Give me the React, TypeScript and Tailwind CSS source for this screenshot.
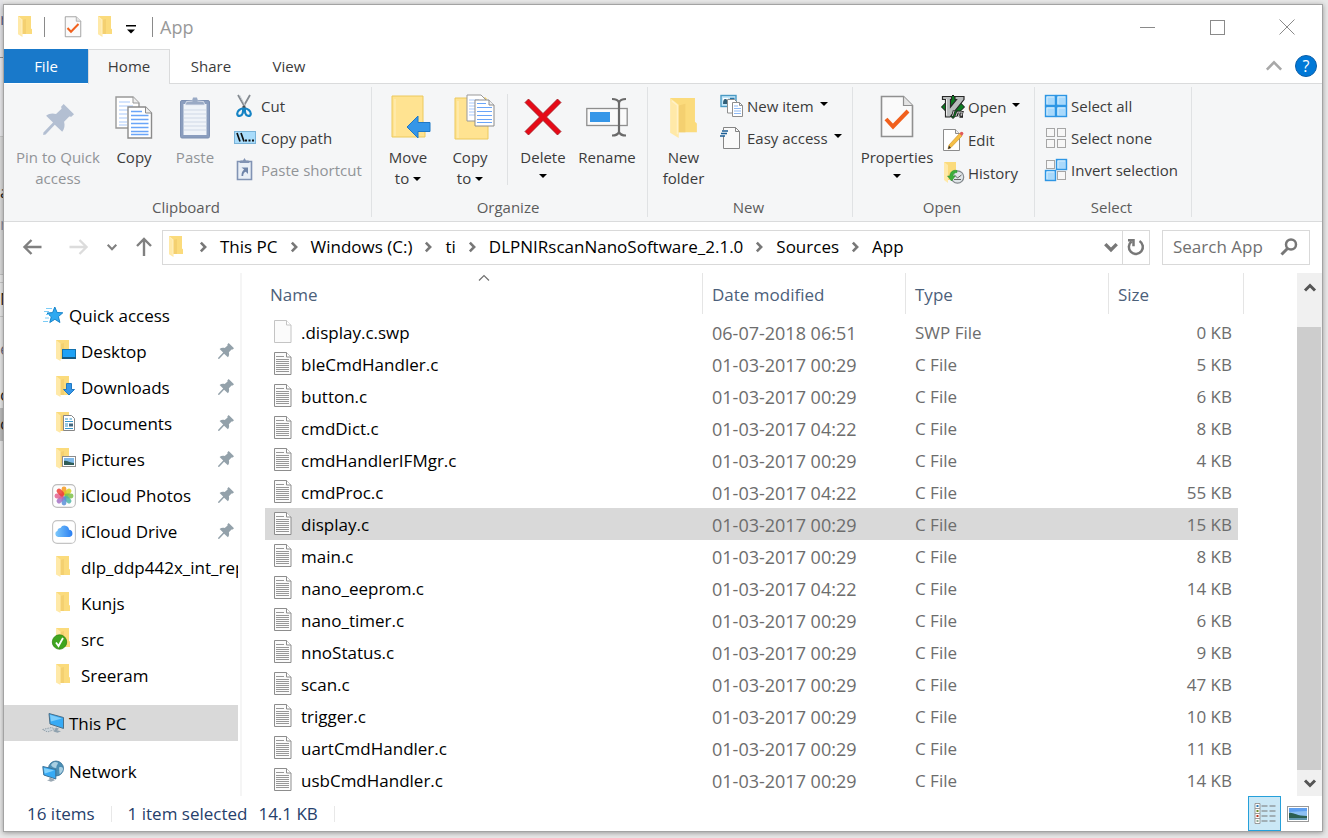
import { useState, type ReactNode } from "react";

type IconProps = { className?: string };

/* ── Icons ─────────────────────────────────────────────────────────── */

function FolderIcon({ className = "w-4 h-[22px]" }: IconProps) {
  return (
    <svg viewBox="0 0 16 22" className={className} aria-hidden="true">
      <path d="M1 0h13v12.5l1 .8V18H4z" fill="#fbdb7c" />
      <path d="M5 4l4-1v15H5z" fill="#f4d070" />
      <path d="M1 0l4.500 3.600V21L1 18.200V0z" fill="#ffe9a8" />
      <path d="M2 1.500l2.800 2.300V19" fill="none" stroke="#fff1c6" strokeWidth=".7" />
    </svg>
  );
}

function PageCheckIcon({ className }: IconProps) {
  return (
    <svg viewBox="0 0 34 44" className={className} aria-hidden="true">
      <path d="M1.500 1.500h22l9 9v31h-31z" fill="#fafafa" stroke="#909090" strokeWidth="1.600" />
      <path d="M23.500 1.500v9h9" fill="#e4e4e4" stroke="#909090" strokeWidth="1.200" />
      <path d="M6 24l7 7.500L28 16" fill="none" stroke="#f1601d" strokeWidth="4" />
    </svg>
  );
}

function PinIcon({ className, color = "#93a1aa" }: IconProps & { color?: string }) {
  return (
    <svg viewBox="0 0 30 30" className={className} fill={color} aria-hidden="true">
      <path d="M20 0l10 10-2.600 2.400-2-.4-5 5.200c1 3.600.4 7-1.800 9.600L11.400 20 2.500 29.600.2 30l.2-2.500L9.700 18 3 11.400c2.800-2.300 6-2.800 9.600-1.800l5.400-5-.5-2z" />
    </svg>
  );
}

function CopyPages({ className }: IconProps) {
  return (
    <svg viewBox="0 0 38 43" className={className} aria-hidden="true">
      <path d="M1 1h17l6 6v25H1z" fill="#fff" stroke="#999" strokeWidth="1.400" />
      <path d="M18 1v6h6" fill="#eee" stroke="#999" />
      <path d="M4 6h11M4 10h14M4 14h9M4 18h8M4 22h8M4 26h8M4 29h8" stroke="#a9c9fb" strokeWidth="1.200" />
      <path d="M13 11h17.500l6 6v25H13z" fill="#fff" stroke="#8b8b8b" strokeWidth="1.400" />
      <path d="M30.500 11v6h6" fill="#eee" stroke="#8b8b8b" />
      <path d="M16 15.500h11M16 19.500h17.500M16 23.500h17.500M16 27.500h17.500M16 31.500h17.500M16 35.500h17.500M16 38.500h17.500" stroke="#6aa5f8" strokeWidth="1.300" />
    </svg>
  );
}

function ClipboardIcon({ className }: IconProps) {
  return (
    <svg viewBox="0 0 30 43" className={className} aria-hidden="true">
      <rect x=".5" y="4.500" width="29" height="37.500" rx="1.500" fill="#8a9dbe" stroke="#7d90b3" />
      <path d="M3.500 8h23v31h-23z" fill="#f0f4f9" />
      <path d="M4 14h22M4 18h22M4 22h22M4 26h22M4 30h22M4 34h22" stroke="#cfd8e6" />
      <path d="M5 9l1.500-3.500 6-.5a2.500 2.500 0 015 0l6 .5L25 9z" fill="#9aaac5" stroke="#e4eaf3" strokeWidth=".8" />
      <path d="M12 5l1-3.500h4L18 5z" fill="#9aaac5" />
    </svg>
  );
}

function CutIcon() {
  return (
    <svg viewBox="0 0 22 24" className="w-[22px] h-6" aria-hidden="true">
      <path d="M4 1l8 14M16 1L8 15" stroke="#858b91" strokeWidth="1.800" fill="none" />
      <path d="M5.500 1l6 11" stroke="#c7ccd1" strokeWidth="1" />
      <path d="M9.500 12l1 2" stroke="#444" strokeWidth="2" />
      <path d="M9.200 14.500c-3 0-6 2.500-6 5.300 0 3.300 4.800 2.300 5.500-.5.500-2 .5-3.300.5-4.800zM10.800 14.500c3 0 6 2.500 6 5.300 0 3.300-4.800 2.300-5.500-.5-.5-2-.5-3.300-.5-4.800z" fill="none" stroke="#1583c4" strokeWidth="2.200" />
    </svg>
  );
}

function CopyPathIcon() {
  return (
    <svg viewBox="0 0 22 22" className="w-[22px] h-[22px]" aria-hidden="true">
      <rect x=".5" y="4.500" width="21" height="12" fill="#a9dcfb" stroke="#7ab3d8" />
      <path d="M3 6l3 8.500M7 6l3 8.500" stroke="#111" strokeWidth="1.700" />
      <path d="M11 12.500h2v2h-2zM14.500 12.500h2v2h-2zM18 12.500h2v2h-2z" fill="#111" />
    </svg>
  );
}

function PasteShortcutIcon() {
  return (
    <svg viewBox="0 0 22 24" className="w-[22px] h-6" aria-hidden="true">
      <path d="M3.500 3.500h14v18h-14z" fill="#e9eff7" stroke="#8193b4" strokeWidth="1.600" />
      <path d="M5.500 5h10l-1-2.500h-2.500L10.500 0 9 2.500H6.500z" fill="#8193b4" />
      <path d="M7.500 9.500H14v6.500l-2.200-2.200c-1.800.5-2.600 2-2.600 4.200H7.500c0-3.200.8-5 2.600-6.500z" fill="#6f85aa" />
    </svg>
  );
}

function LargeFolder() {
  return (
    <g>
      <path d="M1 1h31v26l2 1.500V42H1z" fill="#ffe391" stroke="#ecc95d" />
      <path d="M4 4v37" stroke="#fff0c0" />
    </g>
  );
}

function MoveToIcon() {
  return (
    <svg viewBox="0 0 40 44" className="w-10 h-11" aria-hidden="true">
      <LargeFolder />
      <path d="M16 32l11-11v6.500h12v9H27V43z" fill="#3596e8" stroke="#1f78c6" />
    </svg>
  );
}

function CopyToIcon() {
  return (
    <svg viewBox="0 0 42 47" className="w-[42px] h-[47px]" aria-hidden="true">
      <g transform="translate(0 3)">
        <LargeFolder />
      </g>
      <path d="M13 1h14l5 5v21H13z" fill="#fff" stroke="#999" />
      <path d="M15 6h10M15 9h6M15 12h6M15 15h6M15 18h6M15 21h6" stroke="#a9c9fb" />
      <path d="M21 6h14l5 5v21H21z" fill="#fff" stroke="#8b8b8b" />
      <path d="M35 6v5h5" fill="#eee" stroke="#8b8b8b" />
      <path d="M23 9.500h9M23 13.500h15M23 17.500h15M23 21.500h15M23 25.500h15M23 28.500h15" stroke="#6aa5f8" strokeWidth="1.200" />
    </svg>
  );
}

function DeleteIcon() {
  return (
    <svg viewBox="0 0 38 38" className="w-[38px] h-[38px]" aria-hidden="true">
      <path d="M4.500 1L19 15.500 33.500 1 37 4.500 22.500 19 37 33.500 33.500 37 19 22.500 4.500 37 1 33.500 15.500 19 1 4.500z" fill="#e60a17" stroke="#9d1b22" strokeWidth=".8" />
    </svg>
  );
}

function RenameIcon() {
  return (
    <svg viewBox="0 0 42 40" className="w-[42px] h-10" aria-hidden="true">
      <rect x=".8" y="11.500" width="40.400" height="17" fill="#fafafa" stroke="#8e8e8e" strokeWidth="1.300" />
      <rect x="4" y="15" width="20" height="10" fill="#3596e8" />
      <path d="M26 2c4 0 6 1 7 3.500C34 3 36 2 40 2M33 5v30M26 38.500c4 0 6-1 7-3.500 1 2.500 3 3.500 7 3.500" fill="none" stroke="#6a6a6a" strokeWidth="2.200" />
    </svg>
  );
}

function NewItemIcon() {
  return (
    <svg viewBox="0 0 24 24" className="w-6 h-6" aria-hidden="true">
      <rect x="1" y="1.500" width="15" height="11" fill="#c5e8fa" stroke="#4a9ac4" strokeWidth="1.400" />
      <path d="M3 4h5v6H3z" fill="#fff" />
      <path d="M3 10c0-4 1-5 2.500-5S8 7 8 10z" fill="#315f79" />
      <path d="M10 4.500h4.500" stroke="#2774a5" strokeWidth="1.500" />
      <path d="M7.500 5.500h7l2.500 2.500v11H7.500z" fill="#fff" stroke="#8e8e8e" />
      <path d="M12.500 8.500h7l3 3v11h-10z" fill="#fff" stroke="#8e8e8e" />
      <path d="M19.500 8.500v3h3" fill="none" stroke="#8e8e8e" />
      <path d="M14 12h4M14 14.500h7M14 17h7M14 19.500h7" stroke="#8db9f5" />
    </svg>
  );
}

function EasyAccessIcon() {
  return (
    <svg viewBox="0 0 24 24" className="w-6 h-6" aria-hidden="true">
      <path d="M3.500 1.500h12l4 4v17h-16z" fill="#fafafa" stroke="#858585" />
      <path d="M15.500 1.500v4h4" fill="none" stroke="#858585" />
      <path d="M0 4h7v6H0z" fill="#f5f6f7" />
      <path d="M2 5h6M1 7.500h6M0 10h5" stroke="#1c5f96" strokeWidth="1.300" />
    </svg>
  );
}

function VimIcon() {
  return (
    <svg viewBox="0 0 24 24" className="w-6 h-6" aria-hidden="true">
      <path d="M12 0l11.500 12L12 23.500.5 12z" fill="#0b7d20" stroke="#111" />
      <path d="M1.500 1.500h9v3H9.500v7.500l6-7.500h-1.500v-3h9v3L9 22H4.500V4.500h-3z" fill="#b9bdbd" stroke="#292929" strokeWidth="1.200" />
      <path d="M5.500 4v16.500" stroke="#eee" />
      <path d="M13 15.500l-1.500 6M15 21.500l1.500-5 2 .2-1.200 4.600M18.500 17l2.800.2-1.300 4.300h2" fill="none" stroke="#222" strokeWidth="2.400" />
      <path d="M13 16l-1.500 5M15 21l1.500-4 2 .2-1.200 4M18.500 17l2.800.2-1.300 4" fill="none" stroke="#ccc" strokeWidth="1" />
    </svg>
  );
}

function EditIcon() {
  return (
    <svg viewBox="0 0 24 24" className="w-6 h-6" aria-hidden="true">
      <path d="M2.500 1.500h12l4 4v17h-16z" fill="#fff" stroke="#8c8c8c" />
      <path d="M14.500 1.500v4h4" fill="#eee" stroke="#8c8c8c" />
      <path d="M7 21l1-4L18.500 5.500 21 8 10 19.500z" fill="#f5bf45" stroke="#cc8f21" strokeWidth=".6" />
      <path d="M7 21l1-3.500L10 20z" fill="#333" />
      <path d="M18.500 5.500l1-1.200a1.600 1.600 0 012.500 2.200L21 8z" fill="#e15b5b" />
    </svg>
  );
}

function HistoryIcon() {
  return (
    <svg viewBox="0 0 24 24" className="w-6 h-6" aria-hidden="true">
      <path d="M3 1h12v18H6z" fill="#fbdb7c" />
      <path d="M3 1l4 3v18l-4-3z" fill="#ffe9a8" />
      <circle cx="16.500" cy="16" r="6.200" fill="#dfe5e8" stroke="#82888c" strokeWidth="1.200" />
      <path d="M13 13.500l3.500 3.500 4-3M13 18.500h7" fill="none" stroke="#666" />
      <path d="M16 9.500c-4-1-7 1.500-7.200 5.500H6.500l4 5 3.800-5H12c0-2 1.500-3.500 4-3.500z" fill="#3cae3c" stroke="#258a2d" strokeWidth=".5" />
    </svg>
  );
}

function SelectGridIcon({ picked }: { picked: number[] }) {
  const spots = [[2, 2], [13, 2], [2, 13], [13, 13]];
  return (
    <svg viewBox="0 0 24 24" className="w-6 h-6" aria-hidden="true">
      {spots.map(([x, y], i) =>
        picked.includes(i) ? (
          <g key={i}>
            <rect x={x - 0.5} y={y - 0.5} width="10" height="10" fill="#a9d9fb" stroke="#2e96e4" strokeWidth="1.400" />
            <path d={`M${x + 1} ${y + 8}V${y + 1}h7`} fill="none" stroke="#d5edfd" />
          </g>
        ) : (
          <rect key={i} x={x + 0.5} y={y + 0.5} width="8" height="8" fill="#f7f7f7" stroke="#a6a6a6" />
        )
      )}
    </svg>
  );
}

function FileIcon({ blank }: { blank: boolean }) {
  return (
    <svg viewBox="0 0 18 23" className="w-[18px] h-[23px] mb-1 shrink-0" aria-hidden="true">
      <path d="M.5.5h12l4.500 4.500v17.500H.5z" fill="#fbfbfb" stroke={blank ? "#c4c4c4" : "#8d8d8d"} />
      <path d="M12.500.5V5H17" fill="#fff" stroke={blank ? "#c4c4c4" : "#8d8d8d"} />
      {!blank && <path d="M2 4.500h8M2 7.500h13M2 9.500h13M2 11.500h13M2 13.500h13M2 15.500h13M2 17.500h13M2 19.500h13" stroke="#979797" />}
    </svg>
  );
}

function NavFolder({ children }: { children?: ReactNode }) {
  return (
    <svg viewBox="0 0 24 24" className="w-6 h-6 overflow-visible" aria-hidden="true">
      <path d="M4 0h13v13l1 .5V19H8z" fill="#fbdb7c" />
      <path d="M8.500 4l3.500-1v16H8.500z" fill="#f4d070" />
      <path d="M4 0l4.500 3.500v17.500L4 18.500z" fill="#ffe9a8" />
      {children}
    </svg>
  );
}

function DesktopIcon() {
  return (
    <NavFolder>
      <rect x="10.500" y="9.500" width="13" height="9" fill="#1ea1f5" stroke="#1270ad" />
      <path d="M10 17h14v2H10z" fill="#17587f" />
    </NavFolder>
  );
}

function DownloadsIcon() {
  return (
    <NavFolder>
      <path d="M14.500 7.500h5v6h3L17 19l-5.500-5.500h3z" fill="#3596e8" stroke="#2179c2" />
    </NavFolder>
  );
}

function DocumentsIcon() {
  return (
    <NavFolder>
      <path d="M11.500 3.500h8l3 3v12h-11z" fill="#fff" stroke="#868686" />
      <path d="M13 7h3M17.500 7H20M13 9.500h8M13 12h3M13 14h3M13 16.500h8" stroke="#3596c8" strokeWidth="1.200" />
      <path d="M17 11.500h4v3h-4z" fill="#41667e" />
    </NavFolder>
  );
}

function PicturesIcon() {
  return (
    <NavFolder>
      <rect x="10.500" y="8.500" width="13" height="10" fill="#fff" stroke="#8c8c8c" />
      <path d="M12 10h10v7H12z" fill="#7fb9e9" />
      <path d="M12 13c3-1 5 2 10 2v2H12z" fill="#2f5c57" />
    </NavFolder>
  );
}

function PhotosIcon() {
  const petals = ["#f79a1d", "#d6cf22", "#7cc04a", "#4db6a5", "#5b8fd8", "#a570c4", "#e4618f", "#ee4036"];
  return (
    <svg viewBox="0 0 24 24" className="w-6 h-6" aria-hidden="true">
      <rect x=".6" y=".6" width="22.800" height="22.800" rx="4.500" fill="#fdfdfd" stroke="#bdbdbd" strokeWidth="1.100" />
      {petals.map((color, i) => (
        <rect key={color} x="9.600" y="2.500" width="4.800" height="9" rx="2.400" fill={color} fillOpacity=".85" transform={`rotate(${i * 45} 12 12)`} />
      ))}
    </svg>
  );
}

function CloudIcon() {
  return (
    <svg viewBox="0 0 24 24" className="w-6 h-6" aria-hidden="true">
      <defs>
        <linearGradient id="cloud" x1="0" x2="1">
          <stop offset="0" stopColor="#7cc8fb" />
          <stop offset="1" stopColor="#2a7ff2" />
        </linearGradient>
      </defs>
      <rect x=".6" y=".6" width="22.800" height="22.800" rx="4.500" fill="#fff" stroke="#c4c4c4" strokeWidth="1.100" />
      <path d="M6 17a3.200 3.200 0 01-.5-6.200 3 3 0 013-2.800 4.600 4.600 0 018.600 1.700 3.700 3.700 0 01.4 7.300z" fill="url(#cloud)" />
    </svg>
  );
}

function SyncedFolderIcon() {
  return (
    <NavFolder>
      <circle cx="7.500" cy="14" r="7.200" fill="#3fa51f" stroke="#2c8412" strokeWidth=".8" />
      <path d="M4 14.500l2.500 3.500L11 10" fill="none" stroke="#fff" strokeWidth="1.800" />
    </NavFolder>
  );
}

function StarIcon() {
  return (
    <svg viewBox="0 0 24 24" className="w-6 h-6" aria-hidden="true">
      <path d="M12.800 3l2.300 5.500 5.700.3-4.400 3.800 1.500 5.900-5-3.200-5.100 3.200 1.500-5.700-4.300-3.700 5.600-.5z" fill="#2fa9f1" stroke="#1683ca" />
      <path d="M4 4.500h6M2 7.500h5M4 10.500h3M3 14h4M1 17.500h5" stroke="#7cccf6" strokeWidth="1" />
    </svg>
  );
}

function ThisPcIcon() {
  return (
    <svg viewBox="0 0 24 24" className="w-6 h-6" aria-hidden="true">
      <path d="M7 1.500L21.500 5.500v11L8 12z" fill="#36aaf5" stroke="#4b6f88" />
      <path d="M8 2.800L20 6.500 9 9.500z" fill="#7ccdfb" />
      <path d="M14 15.500l3 1.300-2 1.500 4 1-3.500 1.500-4-1.200z" fill="#8fa1ae" />
      <path d="M.5 17.500l9-2 4 1.700-8 2.800z" fill="#ccd4da" stroke="#94a1ab" strokeDasharray="1.500 1" />
    </svg>
  );
}

function NetworkIcon() {
  return (
    <svg viewBox="0 0 24 24" className="w-6 h-6" aria-hidden="true">
      <circle cx="14" cy="8.500" r="7.500" fill="#4b8fb5" stroke="#356f93" strokeWidth=".8" />
      <path d="M9 5c2-3.500 5-3.500 6.500-2.500s-1.500 2.500-1 4.500-4 1-5.500-2zM17 7.500c3-1 4 0 4 1.500s-2 5-3.500 5z" fill="#a9cfe2" />
      <path d="M.800 6.500l13 3v9.500l-12-4z" fill="#36aaf5" stroke="#3c7196" />
      <path d="M1.800 8l10.500 2.500-9.500 3z" fill="#82d2fc" />
      <path d="M7 17.500l4 1.300 2 1.500-4 1.500-4-1.500 2.500-.8z" fill="#9aa8b3" />
    </svg>
  );
}

function Chevron({ className, width = 3 }: IconProps & { width?: number }) {
  return (
    <svg viewBox="0 0 14 14" className={className} fill="none" stroke="currentColor" strokeWidth={width} aria-hidden="true">
      <path d="M2 4.500l5 5 5-5" />
    </svg>
  );
}

function Arrow({ className }: IconProps) {
  return (
    <svg viewBox="0 0 20 20" className={className} fill="none" stroke="currentColor" strokeWidth="2.400" aria-hidden="true">
      <path d="M19 10H2M9 3l-7 7 7 7" />
    </svg>
  );
}

function Caret() {
  return (
    <svg viewBox="0 0 8 4" className="inline-block w-2 h-1 shrink-0" aria-hidden="true">
      <path d="M0 0h8L4 4z" fill="#000" />
    </svg>
  );
}

/* ── Ribbon pieces ─────────────────────────────────────────────────── */

function RibbonGroup({ label, className, children }: { label: string; className: string; children: ReactNode }) {
  return (
    <section aria-label={label} className={`flex flex-col shrink-0 border-r border-[#e0e2e4] ${className}`}>
      <div className="flex flex-1 items-start">{children}</div>
      <div className="h-5 pr-[3px] text-center text-[15px] leading-5 text-[#5c5c5c]">{label}</div>
    </section>
  );
}

function BigButton({ icon, lines, caret, disabled, className }: {
  icon: ReactNode;
  lines: string[];
  caret?: boolean;
  disabled?: boolean;
  className: string;
}) {
  return (
    <button disabled={disabled} className={`flex flex-col items-center shrink-0 text-[15px] leading-[21px] whitespace-nowrap ${disabled ? "text-[#919497]" : "text-[#3b3b3b]"} ${className}`}>
      <span className="h-[60px] flex items-center justify-center">{icon}</span>
      {lines.map((line, i) => (
        <span key={line} className="flex items-center gap-1">
          {line}
          {caret && i > 0 && <Caret />}
        </span>
      ))}
      {caret && lines.length === 1 && <span className="h-4 flex items-center"><Caret /></span>}
    </button>
  );
}

function SmallButton({ icon, label, caret, disabled }: { icon: ReactNode; label: string; caret?: boolean; disabled?: boolean }) {
  return (
    <button disabled={disabled} className={`flex items-center h-8 text-[15px] whitespace-nowrap ${disabled ? "text-[#919497]" : "text-[#3b3b3b]"}`}>
      <span className="w-[27px] flex">{icon}</span>
      {label}
      {caret && <span className="ml-[6px] mb-1 flex"><Caret /></span>}
    </button>
  );
}

function Ribbon() {
  return (
    <div className="flex h-[138px] bg-[#f5f6f7] border-b border-[#dadbdc] pt-[3px] pb-1 overflow-hidden">
      <RibbonGroup label="Clipboard" className="w-[368px]">
        <BigButton disabled className="w-[108px]" icon={<PinIcon className="w-[31px] h-[31px] mt-1" color="#b3bfd2" />} lines={["Pin to Quick", "access"]} />
        <BigButton className="w-11" icon={<CopyPages className="w-[38px] h-[43px]" />} lines={["Copy"]} />
        <BigButton disabled className="w-[78px]" icon={<ClipboardIcon className="w-[30px] h-[43px]" />} lines={["Paste"]} />
        <div className="flex flex-col pt-[3px]">
          <SmallButton icon={<CutIcon />} label="Cut" />
          <SmallButton icon={<CopyPathIcon />} label="Copy path" />
          <SmallButton disabled icon={<PasteShortcutIcon />} label="Paste shortcut" />
        </div>
      </RibbonGroup>
      <RibbonGroup label="Organize" className="w-[276px]">
        <BigButton caret className="w-[72px]" icon={<span className="pl-[6px]"><MoveToIcon /></span>} lines={["Move", "to"]} />
        <BigButton caret className="w-[52px]" icon={<span className="pl-[9px]"><CopyToIcon /></span>} lines={["Copy", "to"]} />
        <span className="w-px h-[91px] mt-[7px] ml-[11px] bg-[#dfe1e3]" />
        <BigButton caret className="w-[70px]" icon={<DeleteIcon />} lines={["Delete"]} />
        <BigButton className="w-[58px]" icon={<RenameIcon />} lines={["Rename"]} />
      </RibbonGroup>
      <RibbonGroup label="New" className="w-[205px]">
        <BigButton className="w-[71px]" icon={<FolderIcon className="w-[31px] h-[42px] mt-1" />} lines={["New", "folder"]} />
        <div className="flex flex-col pt-[3px] pl-px">
          <SmallButton caret icon={<NewItemIcon />} label="New item" />
          <SmallButton caret icon={<EasyAccessIcon />} label="Easy access" />
        </div>
      </RibbonGroup>
      <RibbonGroup label="Open" className="w-[182px]">
        <BigButton caret className="w-[88px]" icon={<PageCheckIcon className="w-[34px] h-11" />} lines={["Properties"]} />
        <div className="flex flex-col gap-px pt-1">
          <SmallButton caret icon={<VimIcon />} label="Open" />
          <SmallButton icon={<EditIcon />} label="Edit" />
          <SmallButton icon={<HistoryIcon />} label="History" />
        </div>
      </RibbonGroup>
      <RibbonGroup label="Select" className="w-[157px]">
        <div className="flex flex-col pt-[3px] pl-[9px]">
          <SmallButton icon={<SelectGridIcon picked={[0, 1, 2, 3]} />} label="Select all" />
          <SmallButton icon={<SelectGridIcon picked={[]} />} label="Select none" />
          <SmallButton icon={<SelectGridIcon picked={[1, 2]} />} label="Invert selection" />
        </div>
      </RibbonGroup>
    </div>
  );
}

/* ── Window chrome ─────────────────────────────────────────────────── */

function TitleBar() {
  return (
    <header className="flex h-11 items-center pl-[13px]">
      <FolderIcon />
      <span className="w-px h-5 ml-[11px] mr-[19px] bg-[#8a8a8a]" />
      <button aria-label="Properties"><PageCheckIcon className="w-[18px] h-[22px]" /></button>
      <button aria-label="New folder" className="ml-[15px]"><FolderIcon /></button>
      <button aria-label="Customize Quick Access Toolbar" className="ml-[13px] mt-1">
        <svg viewBox="0 0 10 9" className="w-[10px] h-[9px]" aria-hidden="true">
          <path d="M0 0h10v1.500H0zM1 4.500h8L5 8.500z" fill="#000" />
        </svg>
      </button>
      <span className="w-px h-5 ml-4 mr-[7px] bg-[#8a8a8a]" />
      <h1 className="flex-1 text-[18px] text-[#999]">App</h1>
      <div className="flex items-center text-[#8a8a8a]">
        <button aria-label="Minimize" className="w-[70px] h-11 flex items-center justify-center">
          <span className="w-[15px] h-px bg-current" />
        </button>
        <button aria-label="Maximize" className="w-[70px] h-11 flex items-center justify-center">
          <span className="size-[15px] border border-current" />
        </button>
        <button aria-label="Close" className="w-[70px] h-11 flex items-center justify-center">
          <svg viewBox="0 0 16 16" className="w-4 h-4" aria-hidden="true">
            <path d="M.5.5l15 15M15.500.5l-15 15" stroke="currentColor" />
          </svg>
        </button>
      </div>
    </header>
  );
}

function TabStrip() {
  return (
    <nav aria-label="Ribbon tabs" className="flex h-[35px] text-[15px] text-[#3b3b3b]">
      <button className="w-[84px] h-[34px] bg-[#1979ca] text-white">File</button>
      <button className="w-[82px] pb-[2px] bg-[#f5f6f7] border border-b-0 border-[#dadbdc]">Home</button>
      <div className="flex flex-1 border-b border-[#dadbdc]">
        <button className="w-[82px]">Share</button>
        <button className="w-[74px]">View</button>
        <span className="flex-1" />
        <button aria-label="Minimize the Ribbon" className="text-[#a8a8a8] mr-[11px]">
          <Chevron className="w-5 h-5 rotate-180" width={1.8} />
        </button>
        <button aria-label="Help" className="self-center mr-[5px] size-[22px] rounded-full bg-[#0078d7] border border-[#0b5ea8] text-white text-[16px] leading-5">?</button>
      </div>
    </nav>
  );
}

const crumbs = ["This PC", "Windows (C:)", "ti", "DLPNIRscanNanoSoftware_2.1.0", "Sources", "App"];

function AddressBar() {
  return (
    <div className="flex items-center h-[50px] mb-px pl-[18px] pr-3 text-[#808080]">
      <button aria-label="Back"><Arrow className="w-[21px] h-5" /></button>
      <button aria-label="Forward" disabled className="ml-[25px] text-[#dcdcdc]"><Arrow className="w-[21px] h-5 rotate-180" /></button>
      <button aria-label="Recent locations" className="ml-[17px]"><Chevron className="w-3 h-3" width={2.5} /></button>
      <button aria-label="Up" className="ml-4"><Arrow className="w-5 h-5 rotate-90" /></button>
      <div className="flex flex-1 items-center h-[35px] ml-2 border border-[#d9d9d9] text-[17px] text-black pl-[5px]">
        <FolderIcon />
        <ol className="flex flex-1 items-center ml-[13px]">
          {crumbs.map((crumb) => (
            <li key={crumb} className="flex items-center">
              <Chevron className="w-3 h-3 -rotate-90 text-[#777]" />
              <a href="#" className="ml-[11px] mr-[10px] whitespace-nowrap">{crumb}</a>
            </li>
          ))}
        </ol>
        <button aria-label="Previous locations" className="px-[3px] text-[#777]"><Chevron className="w-4 h-4" /></button>
        <button aria-label="Refresh" className="flex items-center justify-center w-[27px] h-full border-l border-[#d9d9d9] text-[#777]">
          <svg viewBox="0 0 18 18" className="w-[18px] h-[18px]" fill="none" stroke="currentColor" strokeWidth="2.500" aria-hidden="true">
            <path d="M12.500 3a7 7 0 11-8 .5M1 2.200h5.500v6" />
          </svg>
        </button>
      </div>
      <div className="flex items-center w-[148px] h-[35px] ml-3 border border-[#d9d9d9] pl-[10px] pr-[11px]">
        <input type="search" aria-label="Search App" placeholder="Search App" className="w-0 flex-1 text-[17px] outline-none placeholder:text-[#707070]" />
        <svg viewBox="0 0 18 18" className="w-[18px] h-[18px] text-[#777]" fill="none" stroke="currentColor" aria-hidden="true">
          <circle cx="11" cy="6.500" r="5" strokeWidth="2.500" />
          <path d="M7.500 10.500L1.500 16.500" strokeWidth="3" />
        </svg>
      </div>
    </div>
  );
}

/* ── Navigation pane ───────────────────────────────────────────────── */

const places = [
  { name: "Desktop", icon: <DesktopIcon />, pinned: true },
  { name: "Downloads", icon: <DownloadsIcon />, pinned: true },
  { name: "Documents", icon: <DocumentsIcon />, pinned: true },
  { name: "Pictures", icon: <PicturesIcon />, pinned: true },
  { name: "iCloud Photos", icon: <PhotosIcon />, pinned: true },
  { name: "iCloud Drive", icon: <CloudIcon />, pinned: true },
  { name: "dlp_ddp442x_int_repo", icon: <NavFolder />, pinned: false },
  { name: "Kunjs", icon: <NavFolder />, pinned: false },
  { name: "src", icon: <SyncedFolderIcon />, pinned: false },
  { name: "Sreeram", icon: <NavFolder />, pinned: false },
];

function NavPane() {
  return (
    <nav aria-label="Navigation pane" className="w-[238px] shrink-0 border-r-2 border-[#f5f5f5] pt-6 pr-[2px] text-[17px] text-black">
      <a href="#" className="flex items-center h-9 pt-[2px] pl-[38px] gap-[3px]"><StarIcon />Quick access</a>
      <ul>
        {places.map((place) => (
          <li key={place.name}>
            <a href="#" className="flex items-center h-9 pt-[2px] pl-12 gap-[5px] overflow-hidden">
              <span className="shrink-0">{place.icon}</span>
              <span className="flex-1 whitespace-nowrap">{place.name}</span>
              {place.pinned && <PinIcon className="w-4 h-4 mr-1 mb-[2px] shrink-0" />}
            </a>
          </li>
        ))}
      </ul>
      <a href="#" className="flex items-center h-9 pt-[2px] pl-[38px] gap-[3px] my-3 bg-[#d9d9d9]"><ThisPcIcon />This PC</a>
      <a href="#" className="flex items-center h-9 pt-[2px] pl-[38px] gap-[3px]"><NetworkIcon />Network</a>
    </nav>
  );
}

/* ── File list ─────────────────────────────────────────────────────── */

const files = [
  { name: ".display.c.swp", date: "06-07-2018 06:51", type: "SWP File", size: "0 KB" },
  { name: "bleCmdHandler.c", date: "01-03-2017 00:29", type: "C File", size: "5 KB" },
  { name: "button.c", date: "01-03-2017 00:29", type: "C File", size: "6 KB" },
  { name: "cmdDict.c", date: "01-03-2017 04:22", type: "C File", size: "8 KB" },
  { name: "cmdHandlerIFMgr.c", date: "01-03-2017 00:29", type: "C File", size: "4 KB" },
  { name: "cmdProc.c", date: "01-03-2017 04:22", type: "C File", size: "55 KB" },
  { name: "display.c", date: "01-03-2017 00:29", type: "C File", size: "15 KB" },
  { name: "main.c", date: "01-03-2017 00:29", type: "C File", size: "8 KB" },
  { name: "nano_eeprom.c", date: "01-03-2017 04:22", type: "C File", size: "14 KB" },
  { name: "nano_timer.c", date: "01-03-2017 00:29", type: "C File", size: "6 KB" },
  { name: "nnoStatus.c", date: "01-03-2017 00:29", type: "C File", size: "9 KB" },
  { name: "scan.c", date: "01-03-2017 00:29", type: "C File", size: "47 KB" },
  { name: "trigger.c", date: "01-03-2017 00:29", type: "C File", size: "10 KB" },
  { name: "uartCmdHandler.c", date: "01-03-2017 00:29", type: "C File", size: "11 KB" },
  { name: "usbCmdHandler.c", date: "01-03-2017 00:29", type: "C File", size: "14 KB" },
];

function FileTable() {
  const [selected, setSelected] = useState("display.c");

  return (
    <div className="flex-1 min-w-0 pl-[23px] pr-[53px]">
      <table className="w-full table-fixed border-separate border-spacing-0 text-[17px] leading-6 text-[#6d6d6d]">
        <colgroup>
          <col />
          <col className="w-[203px]" />
          <col className="w-[203px]" />
          <col className="w-[129px]" />
          <col className="w-[6px]" />
        </colgroup>
        <thead>
          <tr className="text-left text-[#4c607a]">
            <th aria-sort="ascending" className="relative h-[41px] p-0 pt-[2px] pl-[5px] font-normal border-r border-[#e5e5e5]">
              Name
              <Chevron className="absolute -top-[2px] left-1/2 -translate-x-1/2 w-[14px] h-[14px] rotate-180 text-[#707070]" width={1.2} />
            </th>
            <th className="p-0 pt-[2px] pl-[9px] font-normal border-r border-[#e5e5e5]">Date modified</th>
            <th className="p-0 pt-[2px] pl-[9px] font-normal border-r border-[#e5e5e5]">Type</th>
            <th className="p-0 pt-[2px] pl-[9px] font-normal">Size</th>
            <th className="p-0 border-r border-[#e5e5e5]" />
          </tr>
        </thead>
        <tbody>
          <tr aria-hidden="true"><td className="h-[2px] p-0" /></tr>
          {files.map((file) => {
            const bg = file.name === selected ? "bg-[#d9d9d9]" : "";
            return (
              <tr key={file.name} aria-selected={file.name === selected} onClick={() => setSelected(file.name)}>
                <td className={`h-8 p-0 pt-[2px] pl-[9px] text-black ${bg}`}>
                  <span className="flex items-center gap-[9px]">
                    <FileIcon blank={file.type === "SWP File"} />
                    {file.name}
                  </span>
                </td>
                <td className={`p-0 pt-[2px] pl-[9px] text-[18px] ${bg}`}>{file.date}</td>
                <td className={`p-0 pt-[2px] pl-[9px] ${bg}`}>{file.type}</td>
                <td className={`p-0 pt-[2px] pr-[6px] text-right ${bg}`}>{file.size}</td>
                <td className="p-0" />
              </tr>
            );
          })}
        </tbody>
      </table>
    </div>
  );
}

function ScrollBar() {
  return (
    <div className="flex flex-col w-[25px] shrink-0 bg-[#f0f0f0] text-[#555]">
      <button aria-label="Scroll up" className="h-[54px] flex justify-center pt-2"><Chevron className="w-[14px] h-[14px] rotate-180" /></button>
      <div className="flex-1 mr-px bg-[#cdcdcd]" />
      <button aria-label="Scroll down" className="h-[26px] flex items-center justify-center"><Chevron className="w-[14px] h-[14px]" /></button>
    </div>
  );
}

function StatusBar() {
  return (
    <footer className="flex items-center h-[35px] pl-[23px] pr-[13px] text-[17px] text-[#26406b]">
      <span className="pt-px">16 items</span>
      <span className="w-px h-4 mx-4 bg-[#e8e8e8]" />
      <span className="pt-px">1 item selected</span>
      <span className="ml-[11px] pt-px">14.1 KB</span>
      <span className="w-px h-4 ml-4 bg-[#e8e8e8]" />
      <span className="flex-1" />
      <button aria-label="Details view" className="w-[33px] h-[35px] flex items-center justify-center border border-[#26a0da] bg-[#cbe8f6]">
        <svg viewBox="0 0 22 21" className="w-[22px] h-[21px]" aria-hidden="true">
          <path d="M1 .5h5v20H1zM1 5.500h5M1 10.500h5M1 15.500h5" fill="#fff" stroke="#999" />
          <path d="M7.500 3h6M15.500 3h6M7.500 8h6M15.500 8h6M7.500 13h6M15.500 13h6M7.500 18h6M15.500 18h6" stroke="#777" />
          <path d="M2.500 2h2v2h-2z" fill="#2878b8" />
          <path d="M2.500 7h2v2h-2z" fill="#6a8a2a" />
          <path d="M2.500 12h2v2h-2z" fill="#b8321e" />
          <path d="M2.500 17h2v2h-2z" fill="#8aa890" />
        </svg>
      </button>
      <button aria-label="Large icons view" className="ml-[6px]">
        <svg viewBox="0 0 22 16" className="w-[22px] h-4" aria-hidden="true">
          <rect x=".5" y=".5" width="21" height="15" fill="#fff" stroke="#999" />
          <path d="M2 2h18v12H2z" fill="#8dc0f3" />
          <path d="M2 2h18v3L2 6z" fill="#5f9ff0" />
          <path d="M2 7c4-1 7 3 18 3v2H2z" fill="#2c5f51" />
          <path d="M2 12h18v2H2z" fill="#5f95ad" />
        </svg>
      </button>
    </footer>
  );
}

// Sliver of the window that lies behind, seen past the left border
function BehindStrip() {
  return (
    <div aria-hidden="true" className="w-[3px] shrink-0 -mt-1 overflow-hidden text-[17px] leading-6 text-[#222]">
      <div className="h-[58px] pt-[7px] bg-[#e4e4e7] border-b border-[#8f8f8f] text-[#5b6790]">r</div>
      <div className="h-[79px] bg-[#e9e9ec] border-b border-[#c8c8c8]" />
      <div className="h-[138px] pt-[43px] bg-[#dcdcdc] border-b border-[#c4c4c4]">
        <div className="h-8">a</div>
        <div className="text-[#8a8fa0]">n</div>
      </div>
      <div className="h-2 bg-[#e9e9e9] border-b border-[#c8c8c8]" />
      <div className="h-[34px] pt-1 border-b border-[#c8c8c8]">N</div>
      <div className="h-[91px] pt-5">
        <div className="h-[46px] text-[#6d6d80]">e</div>
        <div>c</div>
      </div>
      <div className="h-[33px] pt-1 bg-[#bdbdbd]">c</div>
    </div>
  );
}

export default function App() {
  return (
    <div className="flex min-h-screen bg-[#e8e8e8] pt-1 pr-[5px] pb-[6px] font-['Open_Sans','Noto_Sans',sans-serif]">
      <BehindStrip />
      <main className="flex flex-col flex-1 min-w-0 bg-white border border-[#a3a3a3] shadow-[0_1px_5px_rgba(0,0,0,0.35)]">
        <TitleBar />
        <TabStrip />
        <Ribbon />
        <AddressBar />
        <div className="flex flex-1">
          <NavPane />
          <FileTable />
          <ScrollBar />
        </div>
        <StatusBar />
      </main>
    </div>
  );
}
